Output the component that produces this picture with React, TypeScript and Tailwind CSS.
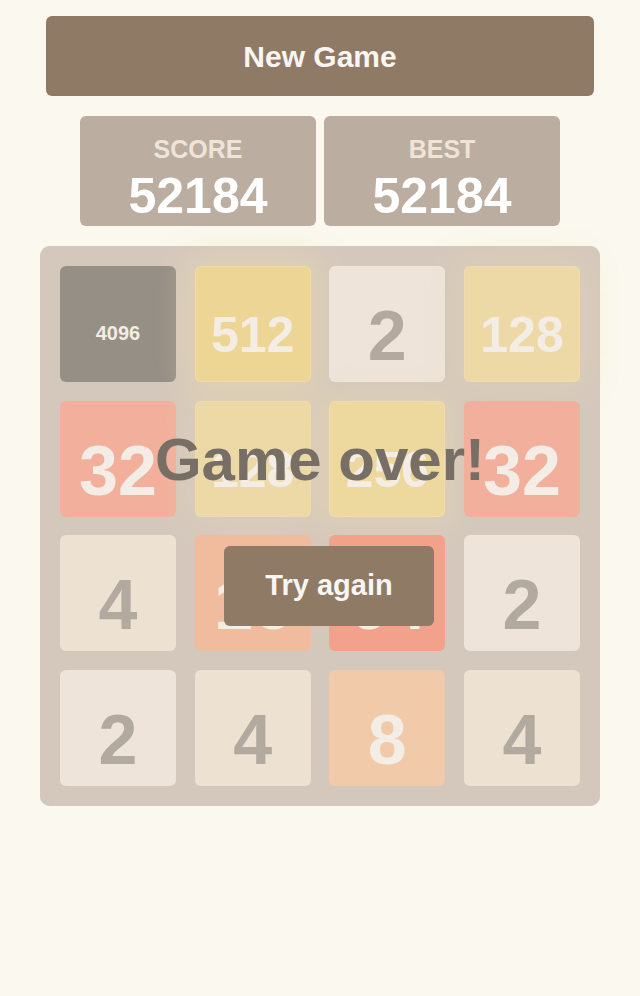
import React from 'react';

type TileStyle = { bg: string; text: string; size: string; pad: string; glow: string };

const tileStyles: Record<number, TileStyle> = {
  2: { bg: 'bg-[#eee4da]', text: 'text-[#776e65]', size: 'text-[70px]', pad: 'pt-[24px]', glow: '' },
  4: { bg: 'bg-[#ede0c8]', text: 'text-[#776e65]', size: 'text-[70px]', pad: 'pt-[24px]', glow: '' },
  8: { bg: 'bg-[#f2b179]', text: 'text-[#f9f6f2]', size: 'text-[70px]', pad: 'pt-[24px]', glow: '' },
  16: { bg: 'bg-[#f59563]', text: 'text-[#f9f6f2]', size: 'text-[70px]', pad: 'pt-[24px]', glow: '' },
  32: { bg: 'bg-[#f67c5f]', text: 'text-[#f9f6f2]', size: 'text-[70px]', pad: 'pt-[24px]', glow: '' },
  64: { bg: 'bg-[#f65e3b]', text: 'text-[#f9f6f2]', size: 'text-[70px]', pad: 'pt-[24px]', glow: '' },
  128: {
    bg: 'bg-[#edcf72]',
    text: 'text-[#f9f6f2]',
    size: 'text-[50px]',
    pad: 'pt-[22px]',
    glow: 'shadow-[0_0_30px_10px_rgba(243,215,116,0.24),inset_0_0_0_1px_rgba(255,255,255,0.14)]',
  },
  256: {
    bg: 'bg-[#edcc61]',
    text: 'text-[#f9f6f2]',
    size: 'text-[50px]',
    pad: 'pt-[22px]',
    glow: 'shadow-[0_0_30px_10px_rgba(243,215,116,0.32),inset_0_0_0_1px_rgba(255,255,255,0.19)]',
  },
  512: {
    bg: 'bg-[#edc850]',
    text: 'text-[#f9f6f2]',
    size: 'text-[50px]',
    pad: 'pt-[22px]',
    glow: 'shadow-[0_0_30px_10px_rgba(243,215,116,0.4),inset_0_0_0_1px_rgba(255,255,255,0.24)]',
  },
  4096: { bg: 'bg-[#3c3a32]', text: 'text-[#f9f6f2]', size: 'text-[20px]', pad: 'pt-[18px]', glow: '' },
};

const board: number[][] = [
  [4096, 512, 2, 128],
  [32, 128, 256, 32],
  [4, 16, 64, 2],
  [2, 4, 8, 4],
];

const Tile: React.FC<{ value: number }> = ({ value }) => {
  const s = tileStyles[value];
  return (
    <div
      className={`h-[116px] rounded-[6px] flex items-center justify-center font-bold leading-none ${s.bg} ${s.text} ${s.size} ${s.pad} ${s.glow}`}
    >
      {value}
    </div>
  );
};

const ScoreBox: React.FC<{ label: string; value: number }> = ({ label, value }) => (
  <div className="w-[236px] h-[110px] rounded-[6px] bg-[#bbada0] flex flex-col items-center pt-[21px]">
    <div className="text-[25px] leading-[25px] font-bold text-[#eee4da]">{label}</div>
    <div className="mt-[9px] text-[50px] leading-[50px] font-bold text-white">{value}</div>
  </div>
);

export default function App() {
  return (
    <div className="min-h-[996px] bg-[#faf8ef] flex flex-col items-center pt-4 font-['Liberation_Sans',Arial,sans-serif]">
      <button className="w-[548px] h-20 rounded-[6px] bg-[#8f7a66] text-[#f9f6f2] text-[30px] font-bold">
        New Game
      </button>

      <div className="mt-5 flex gap-2">
        <ScoreBox label="SCORE" value={52184} />
        <ScoreBox label="BEST" value={52184} />
      </div>

      <div className="relative mt-5 w-[560px] h-[560px] rounded-[10px] bg-[#bbada0] p-5">
        <div className="grid grid-cols-4 gap-[18.66px]">
          {board.flat().map((v, i) => (
            <Tile key={i} value={v} />
          ))}
        </div>

        {/* game over overlay */}
        <div className="absolute inset-0 rounded-[10px] bg-[rgba(238,228,218,0.5)] flex flex-col items-center pt-[184px]">
          <p className="text-[60px] leading-[60px] font-bold text-[#776e65]">Game over!</p>
          <button className="mt-[56px] ml-[18px] w-[210px] h-20 rounded-[6px] bg-[#8f7a66] text-[#f9f6f2] text-[29px] font-bold">
            Try again
          </button>
        </div>
      </div>
    </div>
  );
}
